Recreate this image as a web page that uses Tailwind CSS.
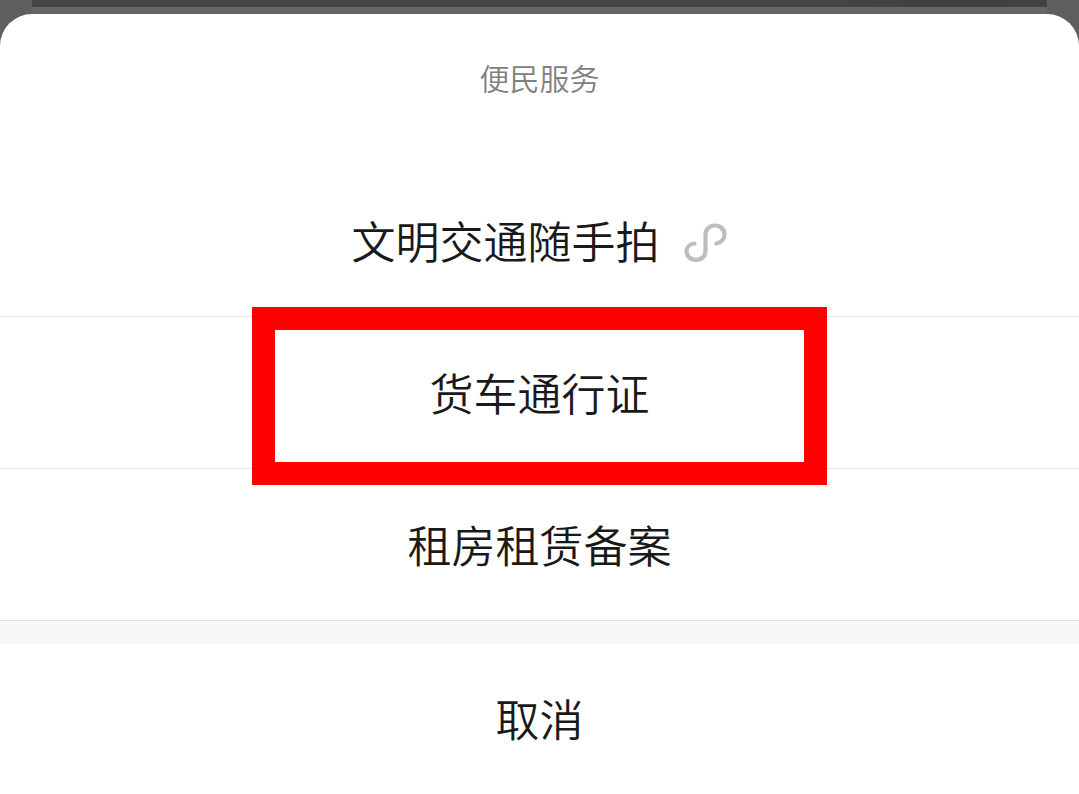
<!DOCTYPE html>
<html lang="zh-CN">
<head>
<meta charset="utf-8">
<meta name="viewport" content="width=device-width,initial-scale=1">
<title>便民服务</title>
<script src="https://cdn.jsdelivr.net/npm/@tailwindcss/browser@4"></script>
</head>
<body class="min-h-screen flex flex-col bg-[#5e5e5e] text-[#191919] font-[350] font-['Noto_Sans_CJK_SC',sans-serif]">

<!-- Dimmed page behind the sheet -->
<div class="h-[14px] shrink-0 px-8">
  <div class="h-full bg-[#666666]">
    <div class="h-[7px] bg-linear-to-r from-[#464646] from-75% via-[#3d4043] via-90% to-[#424242]"></div>
  </div>
</div>

<!-- Action sheet -->
<main class="flex-1 flex flex-col bg-white rounded-t-[32px]">
  <h1 class="h-[150px] pt-[42px] text-center text-[30px] leading-[42px] text-[#808080]">便民服务</h1>

  <ul class="text-[44px] leading-[64px]">
    <li>
      <button type="button" class="w-full h-[152px] flex items-center justify-center gap-6">
        <span>文明交通随手拍</span>
        <svg class="size-11" viewBox="0 0 44 44" fill="none" stroke="#bdbdbd" stroke-width="4.2" stroke-linecap="round" aria-hidden="true">
          <path d="M10.500 25.500C6 26 2.500 29 2.500 33C2.500 38 6.500 42 12 42C17.500 42 21.500 38 21.500 33V16.500C21.500 11.500 25.500 7.500 31 7.500C36.500 7.500 40.500 11.500 40.500 16.500C40.500 21 37 24.500 32.500 25.500"/>
        </svg>
      </button>
    </li>
    <li class="relative border-t border-[#e8e8e8]">
      <button type="button" class="w-full h-[151px] pb-0.5">货车通行证</button>
      <!-- Highlight frame -->
      <div class="absolute -top-[10px] -bottom-[17px] inset-x-0 mx-auto w-[575px] border-[23px] border-[#ff0000] pointer-events-none"></div>
    </li>
    <li class="border-t border-[#e8e8e8]">
      <button type="button" class="w-full h-[151px] pb-0.5">租房租赁备案</button>
    </li>
  </ul>

  <div class="h-6 border-t border-[#dedede] bg-[#f7f7f7]"></div>
  <button type="button" class="w-full flex-1 min-h-[150px] pb-0.5 text-[44px] leading-[64px]">取消</button>
</main>

</body>
</html>
